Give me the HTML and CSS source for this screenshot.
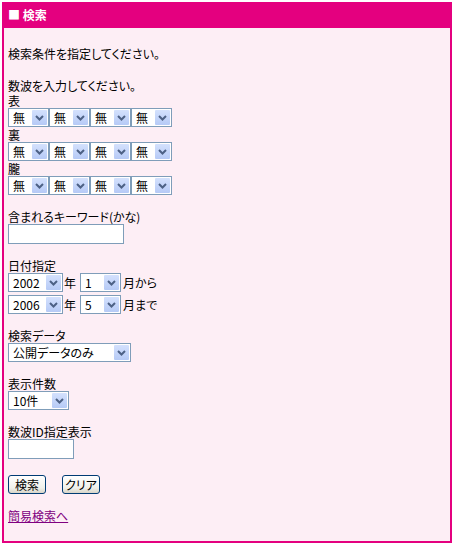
FILE: index.html
```html
<!DOCTYPE html>
<html lang="ja">
<head>
    <meta charset="UTF-8">
    <title>検索</title>
    <link rel="stylesheet" href="styles.css">
</head>
<body>
    <div class="box">
        <div class="head">■ 検索</div>
        <form class="content">
            <p class="intro">検索条件を指定してください。</p>

            <div class="grp first">
                <div class="lbl">数波を入力してください。</div>
                <div class="lbl">表</div>
                <div class="row">
                    <span class="sel w41"><select><option>無</option></select><i class="arr"><svg width="15" height="15"><polyline points="4,6 7.5,9.5 11,6" fill="none" stroke="#4d6185" stroke-width="2"/></svg></i></span><span class="sel w41"><select><option>無</option></select><i class="arr"><svg width="15" height="15"><polyline points="4,6 7.5,9.5 11,6" fill="none" stroke="#4d6185" stroke-width="2"/></svg></i></span><span class="sel w41"><select><option>無</option></select><i class="arr"><svg width="15" height="15"><polyline points="4,6 7.5,9.5 11,6" fill="none" stroke="#4d6185" stroke-width="2"/></svg></i></span><span class="sel w41"><select><option>無</option></select><i class="arr"><svg width="15" height="15"><polyline points="4,6 7.5,9.5 11,6" fill="none" stroke="#4d6185" stroke-width="2"/></svg></i></span>
                </div>
                <div class="lbl">裏</div>
                <div class="row">
                    <span class="sel w41"><select><option>無</option></select><i class="arr"><svg width="15" height="15"><polyline points="4,6 7.5,9.5 11,6" fill="none" stroke="#4d6185" stroke-width="2"/></svg></i></span><span class="sel w41"><select><option>無</option></select><i class="arr"><svg width="15" height="15"><polyline points="4,6 7.5,9.5 11,6" fill="none" stroke="#4d6185" stroke-width="2"/></svg></i></span><span class="sel w41"><select><option>無</option></select><i class="arr"><svg width="15" height="15"><polyline points="4,6 7.5,9.5 11,6" fill="none" stroke="#4d6185" stroke-width="2"/></svg></i></span><span class="sel w41"><select><option>無</option></select><i class="arr"><svg width="15" height="15"><polyline points="4,6 7.5,9.5 11,6" fill="none" stroke="#4d6185" stroke-width="2"/></svg></i></span>
                </div>
                <div class="lbl">朧</div>
                <div class="row">
                    <span class="sel w41"><select><option>無</option></select><i class="arr"><svg width="15" height="15"><polyline points="4,6 7.5,9.5 11,6" fill="none" stroke="#4d6185" stroke-width="2"/></svg></i></span><span class="sel w41"><select><option>無</option></select><i class="arr"><svg width="15" height="15"><polyline points="4,6 7.5,9.5 11,6" fill="none" stroke="#4d6185" stroke-width="2"/></svg></i></span><span class="sel w41"><select><option>無</option></select><i class="arr"><svg width="15" height="15"><polyline points="4,6 7.5,9.5 11,6" fill="none" stroke="#4d6185" stroke-width="2"/></svg></i></span><span class="sel w41"><select><option>無</option></select><i class="arr"><svg width="15" height="15"><polyline points="4,6 7.5,9.5 11,6" fill="none" stroke="#4d6185" stroke-width="2"/></svg></i></span>
                </div>
            </div>

            <div class="grp">
                <div class="lbl">含まれるキーワード(かな)</div>
                <input type="text" class="txt kw">
            </div>

            <div class="grp">
                <div class="lbl">日付指定</div>
                <div class="row date">
                    <span class="sel w55"><select><option>2002</option></select><i class="arr"><svg width="15" height="15"><polyline points="4,6 7.5,9.5 11,6" fill="none" stroke="#4d6185" stroke-width="2"/></svg></i></span>
                    <span class="unit">年</span>
                    <span class="sel w41"><select><option>1</option></select><i class="arr"><svg width="15" height="15"><polyline points="4,6 7.5,9.5 11,6" fill="none" stroke="#4d6185" stroke-width="2"/></svg></i></span>
                    <span class="unit2">月から</span>
                </div>
                <div class="row date">
                    <span class="sel w55"><select><option>2006</option></select><i class="arr"><svg width="15" height="15"><polyline points="4,6 7.5,9.5 11,6" fill="none" stroke="#4d6185" stroke-width="2"/></svg></i></span>
                    <span class="unit">年</span>
                    <span class="sel w41"><select><option>5</option></select><i class="arr"><svg width="15" height="15"><polyline points="4,6 7.5,9.5 11,6" fill="none" stroke="#4d6185" stroke-width="2"/></svg></i></span>
                    <span class="unit2">月まで</span>
                </div>
            </div>

            <div class="grp">
                <div class="lbl">検索データ</div>
                <div class="row">
                    <span class="sel w123"><select><option>公開データのみ</option></select><i class="arr"><svg width="15" height="15"><polyline points="4,6 7.5,9.5 11,6" fill="none" stroke="#4d6185" stroke-width="2"/></svg></i></span>
                </div>
            </div>

            <div class="grp">
                <div class="lbl">表示件数</div>
                <div class="row">
                    <span class="sel w61"><select><option>10件</option></select><i class="arr"><svg width="15" height="15"><polyline points="4,6 7.5,9.5 11,6" fill="none" stroke="#4d6185" stroke-width="2"/></svg></i></span>
                </div>
            </div>

            <div class="grp">
                <div class="lbl">数波ID指定表示</div>
                <input type="text" class="txt idn">
            </div>

            <div class="grp btns">
                <button type="button" class="btn">検索</button>
                <button type="reset" class="btn">クリア</button>
            </div>

            <div class="grp">
                <a href="#" class="link">簡易検索へ</a>
            </div>
        </form>
    </div>
</body>
</html>
```

FILE: styles.css
```css
body {
    margin: 2px;
    background: #fff;
    font-family: "Noto Sans CJK JP", "DejaVu Sans", sans-serif;
    font-size: 12px;
    line-height: 15px;
    color: #000;
}
.box {
    box-sizing: border-box;
    width: 450px;
    height: 541px;
    border: 2px solid #e4007f;
    background: #fdeef5;
}
.head {
    height: 24px;
    line-height: 22px;
    padding-left: 4px;
    background: #e4007f;
    color: #fff;
    font-weight: bold;
    font-size: 12px;
}
.content {
    margin: 0;
    padding: 0 4px;
    font-feature-settings: "palt";
}
.intro { margin: 0; padding-top: 18px; }
.grp { margin-top: 14px; }
.grp.first { margin-top: 17px; }
.grp.btns { display: flex; gap: 16px; margin-top: 16px; }
.lbl { height: 15px; }
.row { display: flex; align-items: center; height: 19px; }
.row.date + .row.date { margin-top: 3px; }

.sel {
    box-sizing: border-box;
    display: inline-flex;
    align-items: center;
    height: 19px;
    border: 1px solid #7f9db9;
    background: #fff;
}
.sel select {
    appearance: none;
    -webkit-appearance: none;
    flex: 1;
    min-width: 0;
    height: 17px;
    border: 0;
    margin: 0;
    padding: 0 0 0 4px;
    background: #fff;
    font: inherit;
    color: #000;
    outline: none;
}
.arr {
    display: block;
    width: 15px;
    height: 15px;
    margin: 1px;
    border-radius: 1px;
    background: linear-gradient(#d4e1fd, #b6caf6);
}
.arr svg { display: block; }
.w41 { width: 41px; }
.w55 { width: 55px; }
.w61 { width: 61px; }
.w123 { width: 123px; }
.unit { margin: 0 4px 0 1px; }
.unit2 { margin-left: 2px; }

.txt {
    box-sizing: border-box;
    display: block;
    height: 20px;
    margin: 0;
    border: 1px solid #7f9db9;
    background: #fff;
    padding: 0 2px;
}
.kw { width: 116px; }
.idn { width: 66px; }

.btn {
    box-sizing: border-box;
    width: 38px;
    height: 19px;
    padding: 0;
    margin: 0;
    border: 1px solid #003c74;
    border-radius: 3px;
    background: linear-gradient(#ffffff, #f0f0ea 70%, #d8d5c8);
    font: inherit;
    color: #000;
}
.link { color: #800080; text-decoration: underline; }
```
